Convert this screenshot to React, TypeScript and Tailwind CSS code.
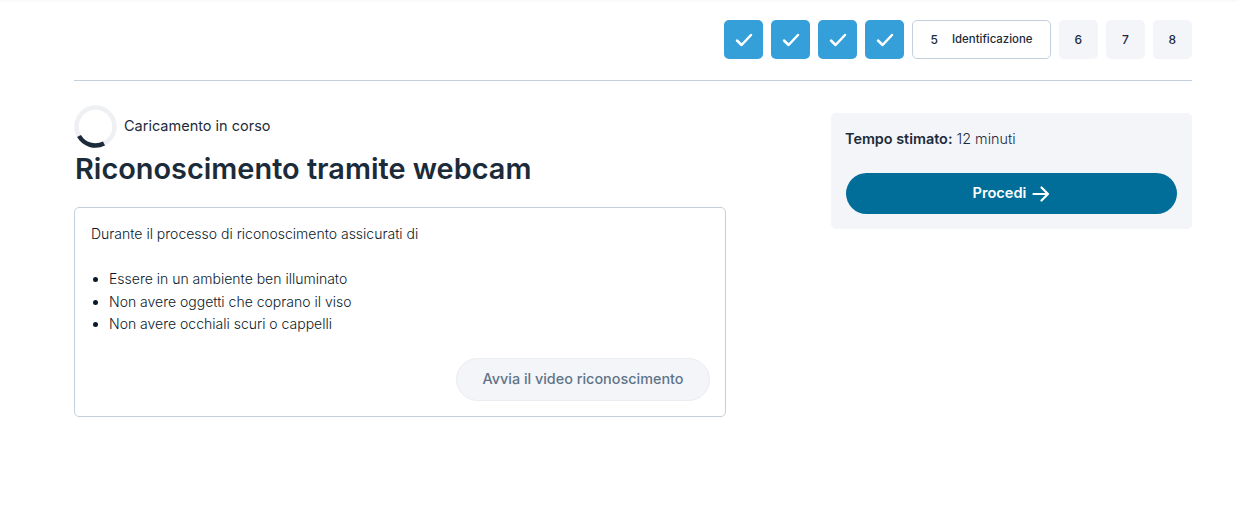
import React from 'react';

const Check = () => (
  <svg width="18" height="14" viewBox="0 0 18 14" fill="none" stroke="#fff" strokeWidth="2.5" strokeLinecap="round" strokeLinejoin="round">
    <path d="M2 7.5 L6.6 12 L16 2" />
  </svg>
);

const Spinner = () => (
  <svg width="43" height="43" viewBox="0 0 43 43" fill="none" className="shrink-0">
    <circle cx="21.5" cy="21.5" r="19" stroke="#eef0f3" strokeWidth="4.5" />
    <path d="M5 31 A19 19 0 0 0 30 38.5" stroke="#1c2b3a" strokeWidth="4.5" />
  </svg>
);

const App: React.FC = () => {
  return (
    <div className="min-h-[507px] bg-white font-['Inter',sans-serif] text-[#1c2b3a] shadow-[inset_0_3px_3px_-2px_rgba(0,0,0,0.04)]">
      <div className="ml-[74px] w-[1118px] pt-5">
        <div className="flex justify-end gap-[7.75px] pb-[21px] border-b border-[#c3d0dc]">
          {[1, 2, 3, 4].map((n) => (
            <div key={n} className="flex h-[39px] w-[39.25px] items-center justify-center rounded-[5px] bg-[#349fd9]">
              <Check />
            </div>
          ))}
          <div className="flex h-[39px] w-[139px] items-center justify-center gap-[14px] rounded-[5px] border border-[#c3d0dc] text-[11.4px] font-medium">
            <span className="text-[12px]">5</span>
            <span>Identificazione</span>
          </div>
          {[6, 7, 8].map((n) => (
            <div key={n} className="flex h-[39px] w-[39.25px] items-center justify-center rounded-[5px] bg-[#f4f5f9] text-[12px] font-medium">
              {n}
            </div>
          ))}
        </div>

        <div className="flex justify-between pt-6">
          <div className="w-[652px]">
            <div className="flex items-center gap-[7px]">
              <Spinner />
              <span className="pb-[2px] text-[14.5px]">Caricamento in corso</span>
            </div>
            <h1 className="pl-px text-[28.9px] leading-[42px] font-semibold">Riconoscimento tramite webcam</h1>
            <div className="mt-[17px] h-[210px] rounded-[5px] border border-[#c3d0dc] pl-4 pr-[15px] pt-[15px] text-[#0b1a28]">
              <p className="text-[14px] leading-[22.5px] font-light">Durante il processo di riconoscimento assicurati di</p>
              <ul className="mt-[22.5px] list-disc pl-[18px] text-[14px] leading-[22.5px] font-light">
                <li>Essere in un ambiente ben illuminato</li>
                <li>Non avere oggetti che coprano il viso</li>
                <li>Non avere occhiali scuri o cappelli</li>
              </ul>
              <div className="mt-[22px] flex justify-end">
                <button className="h-[43px] w-[254px] rounded-full border border-[#e9ecf1] bg-[#f4f5f9] text-[14.4px] font-medium text-[#5f7487]">
                  Avvia il video riconoscimento
                </button>
              </div>
            </div>
          </div>

          <div className="mt-2 h-[116px] w-[361px] rounded-[5px] bg-[#f4f5f9] pl-[14px] pr-[15px] pt-[15px]">
            <p className="text-[14.4px] leading-[22px] font-light">
              <span className="font-semibold">Tempo stimato:</span> 12 minuti
            </p>
            <button className="mt-[23px] ml-px flex h-[41px] w-[331px] items-center justify-center gap-[6px] rounded-full bg-[#006e99] text-[14.6px] font-semibold text-white">
              Procedi
              <svg width="18" height="16" viewBox="0 0 18 16" fill="none" stroke="#fff" strokeWidth="2.2" strokeLinecap="round" strokeLinejoin="round">
                <path d="M1.5 8 H16 M9.5 1.5 L16 8 L9.5 14.5" />
              </svg>
            </button>
          </div>
        </div>
      </div>
    </div>
  );
};

export default App;
